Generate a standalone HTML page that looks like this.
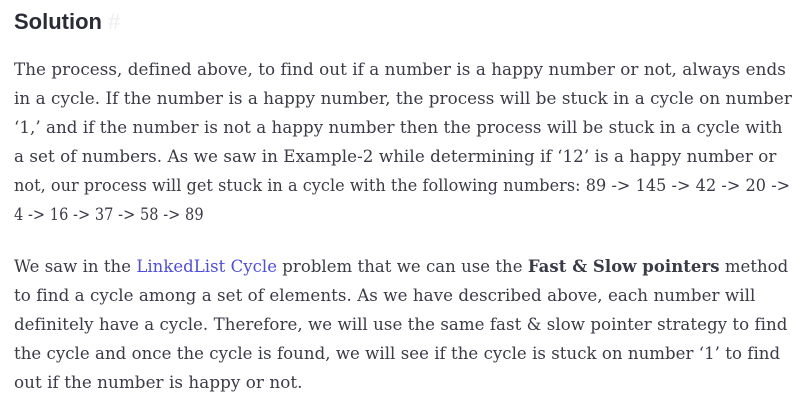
<!DOCTYPE html>
<html><head><meta charset="utf-8"><style>
body{margin:0;background:#fff;width:808px;height:408px;overflow:hidden}
h2{position:absolute;left:14px;top:8px;margin:0;font:bold 22px/28px "Liberation Sans",sans-serif;color:#2b2b38}
h2 span{color:#eeeef2;font-weight:normal;margin-left:6px}
.l{position:absolute;left:14px;white-space:nowrap;font:17px/29px "DejaVu Serif",serif;color:#3a3a48;letter-spacing:0.05px;transform-origin:0 50%}
a{color:#4b4bf0;text-decoration:none}
</style></head><body>
<h2>Solution<span>#</span></h2>
<div class="l" style="top:56px;transform:scaleX(.985)">The process, defined above, to find out if a number is a happy number or not, always ends</div>
<div class="l" style="top:85px;transform:scaleX(.985)">in a cycle. If the number is a happy number, the process will be stuck in a cycle on number</div>
<div class="l" style="top:114px;transform:scaleX(.98)">‘1,’ and if the number is not a happy number then the process will be stuck in a cycle with</div>
<div class="l" style="top:143px;transform:scaleX(.984)">a set of numbers. As we saw in Example-2 while determining if ‘12’ is a happy number or</div>
<div class="l" style="top:172px;transform:scaleX(.945)">not, our process will get stuck in a cycle with the following numbers: 89 -&gt; 145 -&gt; 42 -&gt; 20 -&gt;</div>
<div class="l" style="top:201px;transform:scaleX(.855)">4 -&gt; 16 -&gt; 37 -&gt; 58 -&gt; 89</div>
<div class="l" style="top:253px;transform:scaleX(.97)">We saw in the <a>LinkedList Cycle</a> problem that we can use the <b>Fast &amp; Slow pointers</b> method</div>
<div class="l" style="top:282px;transform:scaleX(.981)">to find a cycle among a set of elements. As we have described above, each number will</div>
<div class="l" style="top:311px;transform:scaleX(.977)">definitely have a cycle. Therefore, we will use the same fast &amp; slow pointer strategy to find</div>
<div class="l" style="top:340px;transform:scaleX(.973)">the cycle and once the cycle is found, we will see if the cycle is stuck on number ‘1’ to find</div>
<div class="l" style="top:369px;transform:scaleX(.986)">out if the number is happy or not.</div>
</body></html>
